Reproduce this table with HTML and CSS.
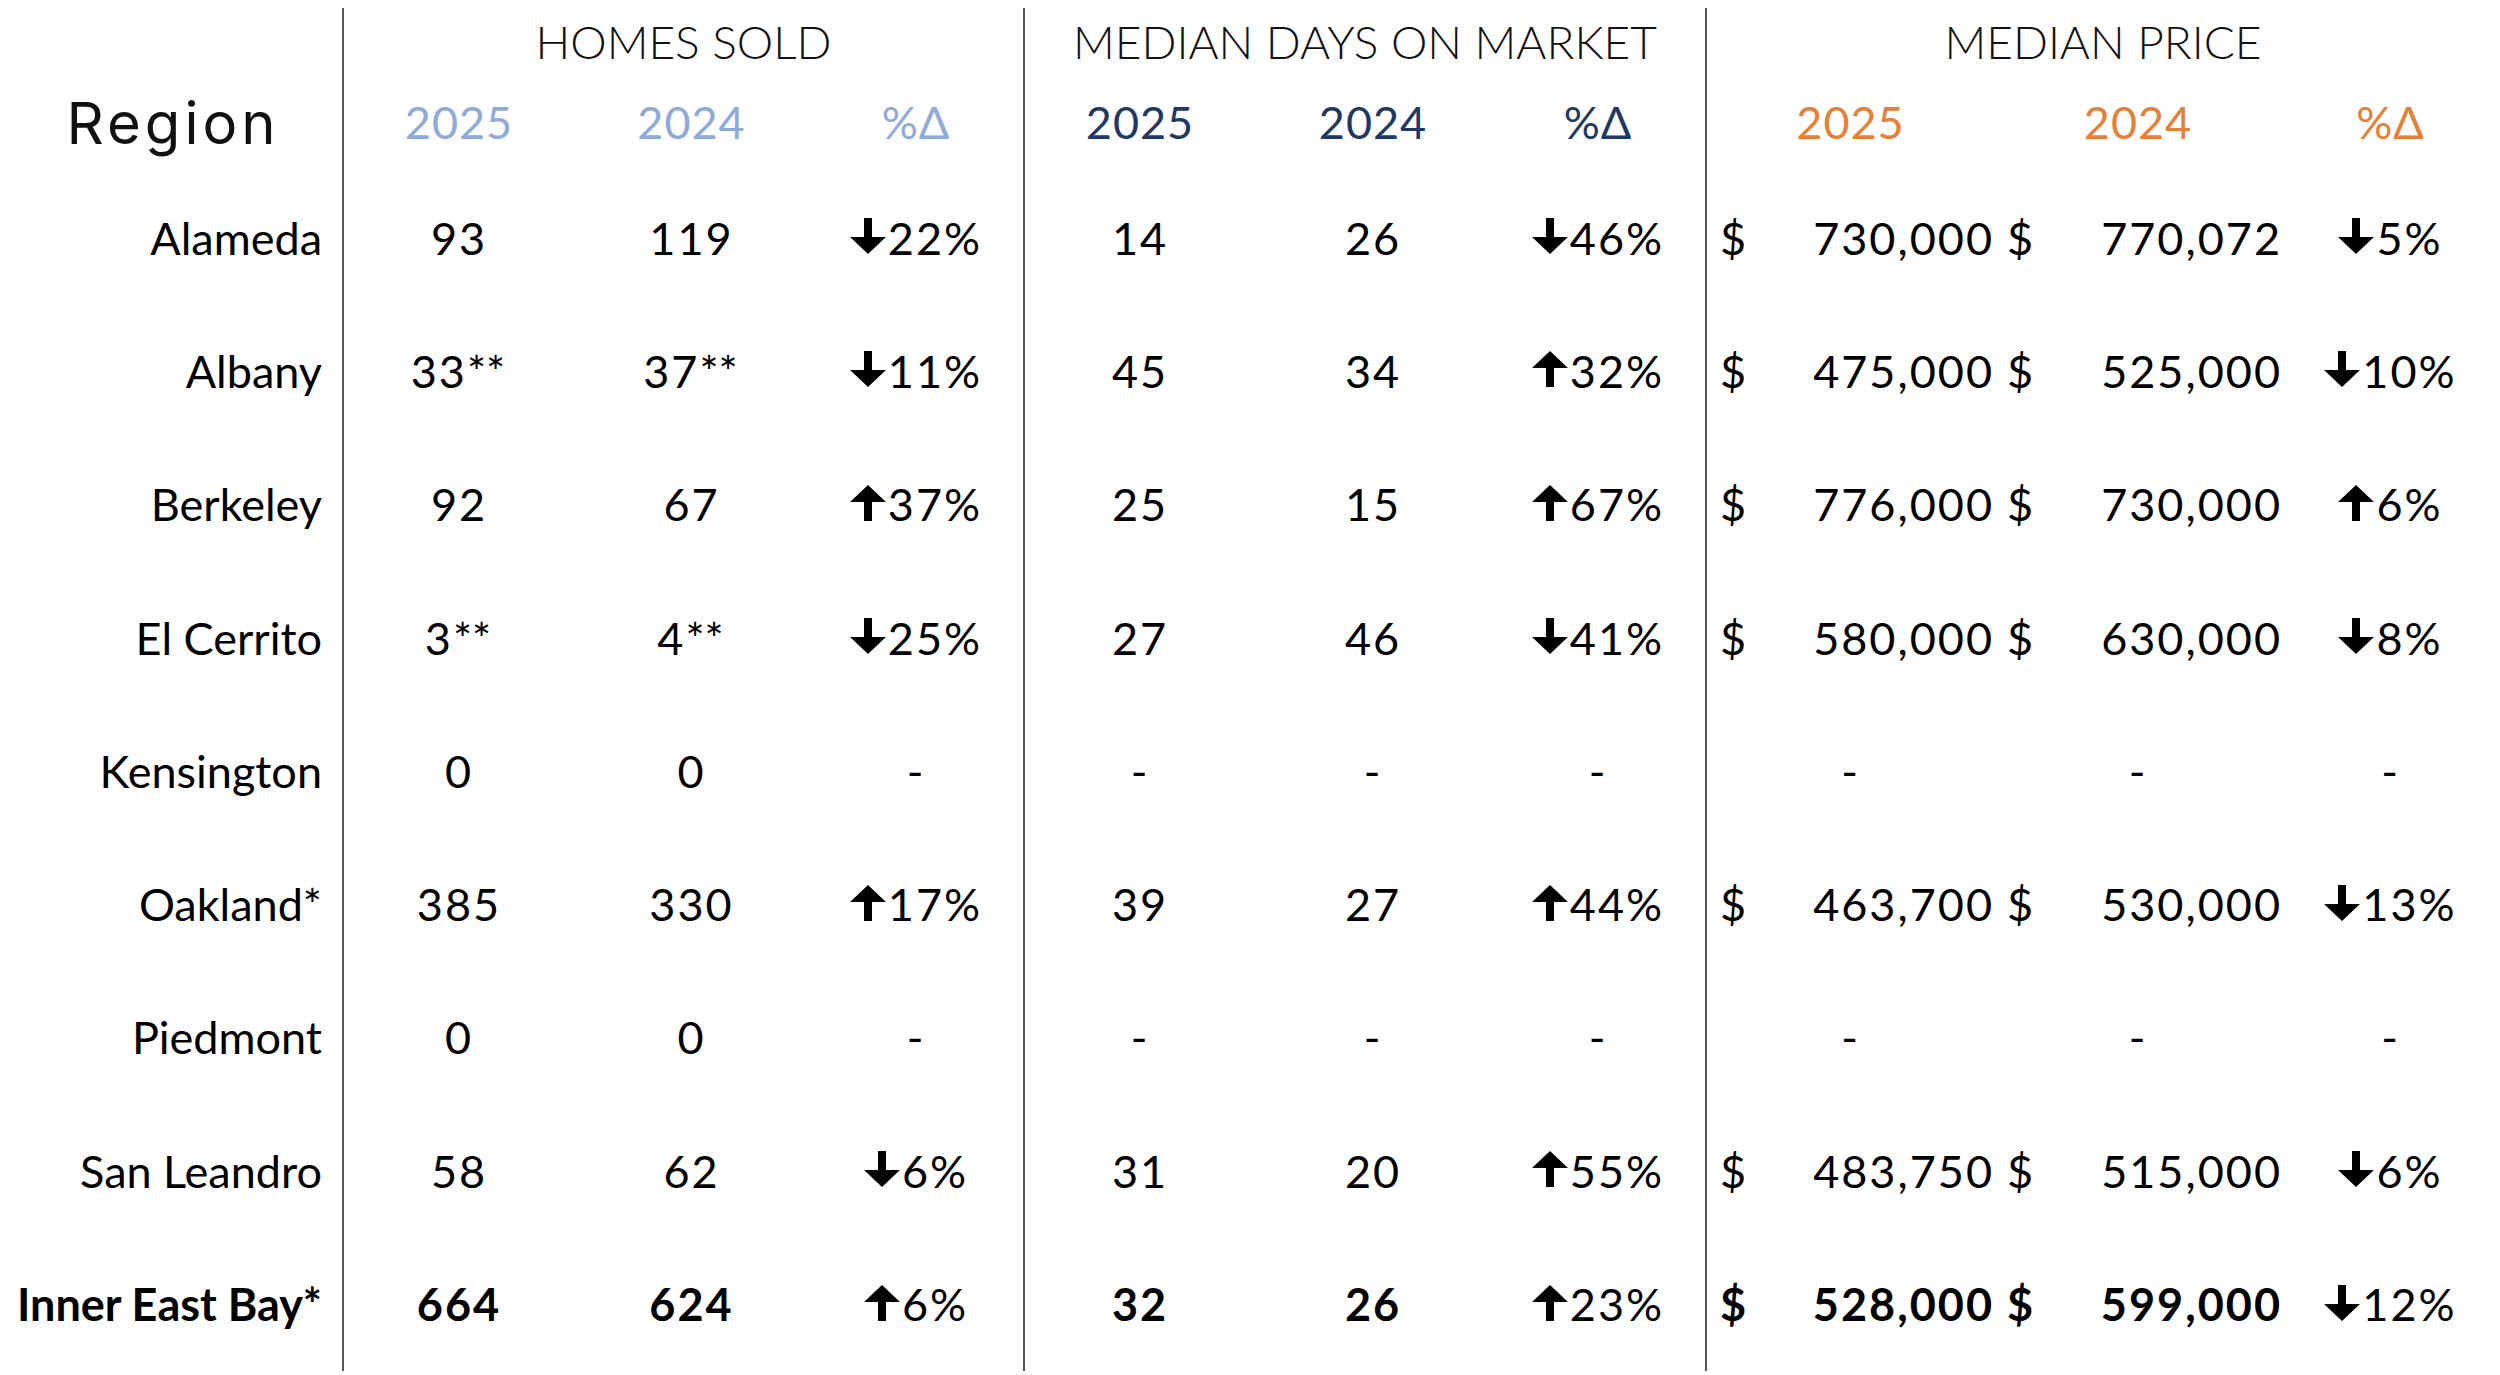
FILE: index.html
```html
<!DOCTYPE html>
<html lang="en">
<head>
<meta charset="utf-8">
<title>Inner East Bay Market Summary</title>
<link rel="stylesheet" href="styles.css">
</head>
<body>
<div class="sheet">
  <div class="corner"></div>
  <div class="gtitle sep">HOMES SOLD</div>
  <div class="gtitle sep">MEDIAN DAYS ON MARKET</div>
  <div class="gtitle sep">MEDIAN PRICE</div>

  <div class="region-head">Region</div>
  <div class="yr blue sep">2025</div><div class="yr blue">2024</div><div class="yr blue">%&Delta;</div>
  <div class="yr navy sep">2025</div><div class="yr navy">2024</div><div class="yr navy">%&Delta;</div>
  <div class="yr orange sep">2025</div><div class="yr orange">2024</div><div class="yr orange">%&Delta;</div>

  <!-- Alameda -->
  <div class="name">Alameda</div>
  <div class="c sep">93</div><div class="c">119</div>
  <div class="c"><svg class="arr" viewBox="0 0 36 36"><path d="M14 0h8v19h14L18 36 0 19h14z"/></svg>22%</div>
  <div class="c sep">14</div><div class="c">26</div>
  <div class="c"><svg class="arr" viewBox="0 0 36 36"><path d="M14 0h8v19h14L18 36 0 19h14z"/></svg>46%</div>
  <div class="m sep"><span>$</span><span>730,000</span></div>
  <div class="m"><span>$</span><span>770,072</span></div>
  <div class="c"><svg class="arr" viewBox="0 0 36 36"><path d="M14 0h8v19h14L18 36 0 19h14z"/></svg>5%</div>

  <!-- Albany -->
  <div class="name">Albany</div>
  <div class="c sep">33<span class="ast">**</span></div><div class="c">37<span class="ast">**</span></div>
  <div class="c"><svg class="arr" viewBox="0 0 36 36"><path d="M14 0h8v19h14L18 36 0 19h14z"/></svg>11%</div>
  <div class="c sep">45</div><div class="c">34</div>
  <div class="c"><svg class="arr" viewBox="0 0 36 36"><path d="M18 0l18 17H22v19h-8V17H0z"/></svg>32%</div>
  <div class="m sep"><span>$</span><span>475,000</span></div>
  <div class="m"><span>$</span><span>525,000</span></div>
  <div class="c"><svg class="arr" viewBox="0 0 36 36"><path d="M14 0h8v19h14L18 36 0 19h14z"/></svg>10%</div>

  <!-- Berkeley -->
  <div class="name">Berkeley</div>
  <div class="c sep">92</div><div class="c">67</div>
  <div class="c"><svg class="arr" viewBox="0 0 36 36"><path d="M18 0l18 17H22v19h-8V17H0z"/></svg>37%</div>
  <div class="c sep">25</div><div class="c">15</div>
  <div class="c"><svg class="arr" viewBox="0 0 36 36"><path d="M18 0l18 17H22v19h-8V17H0z"/></svg>67%</div>
  <div class="m sep"><span>$</span><span>776,000</span></div>
  <div class="m"><span>$</span><span>730,000</span></div>
  <div class="c"><svg class="arr" viewBox="0 0 36 36"><path d="M18 0l18 17H22v19h-8V17H0z"/></svg>6%</div>

  <!-- El Cerrito -->
  <div class="name">El Cerrito</div>
  <div class="c sep">3<span class="ast">**</span></div><div class="c">4<span class="ast">**</span></div>
  <div class="c"><svg class="arr" viewBox="0 0 36 36"><path d="M14 0h8v19h14L18 36 0 19h14z"/></svg>25%</div>
  <div class="c sep">27</div><div class="c">46</div>
  <div class="c"><svg class="arr" viewBox="0 0 36 36"><path d="M14 0h8v19h14L18 36 0 19h14z"/></svg>41%</div>
  <div class="m sep"><span>$</span><span>580,000</span></div>
  <div class="m"><span>$</span><span>630,000</span></div>
  <div class="c"><svg class="arr" viewBox="0 0 36 36"><path d="M14 0h8v19h14L18 36 0 19h14z"/></svg>8%</div>

  <!-- Kensington -->
  <div class="name">Kensington</div>
  <div class="c sep">0</div><div class="c">0</div><div class="c">-</div>
  <div class="c sep">-</div><div class="c">-</div><div class="c">-</div>
  <div class="c sep">-</div><div class="c">-</div><div class="c">-</div>

  <!-- Oakland -->
  <div class="name">Oakland*</div>
  <div class="c sep">385</div><div class="c">330</div>
  <div class="c"><svg class="arr" viewBox="0 0 36 36"><path d="M18 0l18 17H22v19h-8V17H0z"/></svg>17%</div>
  <div class="c sep">39</div><div class="c">27</div>
  <div class="c"><svg class="arr" viewBox="0 0 36 36"><path d="M18 0l18 17H22v19h-8V17H0z"/></svg>44%</div>
  <div class="m sep"><span>$</span><span>463,700</span></div>
  <div class="m"><span>$</span><span>530,000</span></div>
  <div class="c"><svg class="arr" viewBox="0 0 36 36"><path d="M14 0h8v19h14L18 36 0 19h14z"/></svg>13%</div>

  <!-- Piedmont -->
  <div class="name">Piedmont</div>
  <div class="c sep">0</div><div class="c">0</div><div class="c">-</div>
  <div class="c sep">-</div><div class="c">-</div><div class="c">-</div>
  <div class="c sep">-</div><div class="c">-</div><div class="c">-</div>

  <!-- San Leandro -->
  <div class="name">San Leandro</div>
  <div class="c sep">58</div><div class="c">62</div>
  <div class="c"><svg class="arr" viewBox="0 0 36 36"><path d="M14 0h8v19h14L18 36 0 19h14z"/></svg>6%</div>
  <div class="c sep">31</div><div class="c">20</div>
  <div class="c"><svg class="arr" viewBox="0 0 36 36"><path d="M18 0l18 17H22v19h-8V17H0z"/></svg>55%</div>
  <div class="m sep"><span>$</span><span>483,750</span></div>
  <div class="m"><span>$</span><span>515,000</span></div>
  <div class="c"><svg class="arr" viewBox="0 0 36 36"><path d="M14 0h8v19h14L18 36 0 19h14z"/></svg>6%</div>

  <!-- Inner East Bay -->
  <div class="name total">Inner East Bay*</div>
  <div class="c sep total">664</div><div class="c total">624</div>
  <div class="c"><svg class="arr" viewBox="0 0 36 36"><path d="M18 0l18 17H22v19h-8V17H0z"/></svg>6%</div>
  <div class="c sep total">32</div><div class="c total">26</div>
  <div class="c"><svg class="arr" viewBox="0 0 36 36"><path d="M18 0l18 17H22v19h-8V17H0z"/></svg>23%</div>
  <div class="m sep total"><span>$</span><span>528,000</span></div>
  <div class="m total"><span>$</span><span>599,000</span></div>
  <div class="c"><svg class="arr" viewBox="0 0 36 36"><path d="M14 0h8v19h14L18 36 0 19h14z"/></svg>12%</div>
</div>
</body>
</html>
```

FILE: styles.css
```css
html, body {
  margin: 0;
  padding: 0;
  background: #ffffff;
}

body {
  font-family: Lato, "Liberation Sans", sans-serif;
  color: #000000;
}

.sheet {
  margin-top: 8px;
  display: grid;
  grid-template-columns: 342px 232px 235px 214px 232px 236px 214px 289px 288px 217px;
  grid-template-rows: 71px 92px repeat(9, 133.3px);
  width: 2499px;
}

.sheet > div {
  box-sizing: border-box;
  display: flex;
  align-items: center;
  justify-content: center;
  white-space: nowrap;
}

.sep {
  border-left: 2px solid #555555;
}

.gtitle {
  grid-column: span 3;
  font-weight: 300;
  font-size: 46px;
  color: #111111;
  padding-bottom: 4px;
}

.region-head {
  font-family: Inter, Lato, sans-serif;
  font-size: 58px;
  font-weight: 400;
  letter-spacing: 4px;
  color: #111111;
  padding-left: 4px;
  padding-bottom: 4px;
}

.yr {
  font-size: 45px;
  font-weight: 400;
  letter-spacing: 1px;
  padding-bottom: 7px;
}

.blue { color: #8eaadb; }
.navy { color: #203864; }
.orange { color: #e67f37; }

.name {
  font-size: 45px;
  justify-content: flex-end !important;
  padding-right: 20px;
}

.c {
  font-size: 45px;
  letter-spacing: 2px;
}

.ast {
  letter-spacing: 0;
  padding-right: 2px;
}

.m {
  font-size: 45px;
  letter-spacing: 2px;
  justify-content: space-between !important;
  padding-left: 13px;
  padding-right: 0;
}

.total {
  font-weight: 700;
}

.arr {
  width: 36px;
  height: 36px;
  margin-right: 2px;
  fill: #000000;
  align-self: center;
  margin-top: -3px;
}
```
